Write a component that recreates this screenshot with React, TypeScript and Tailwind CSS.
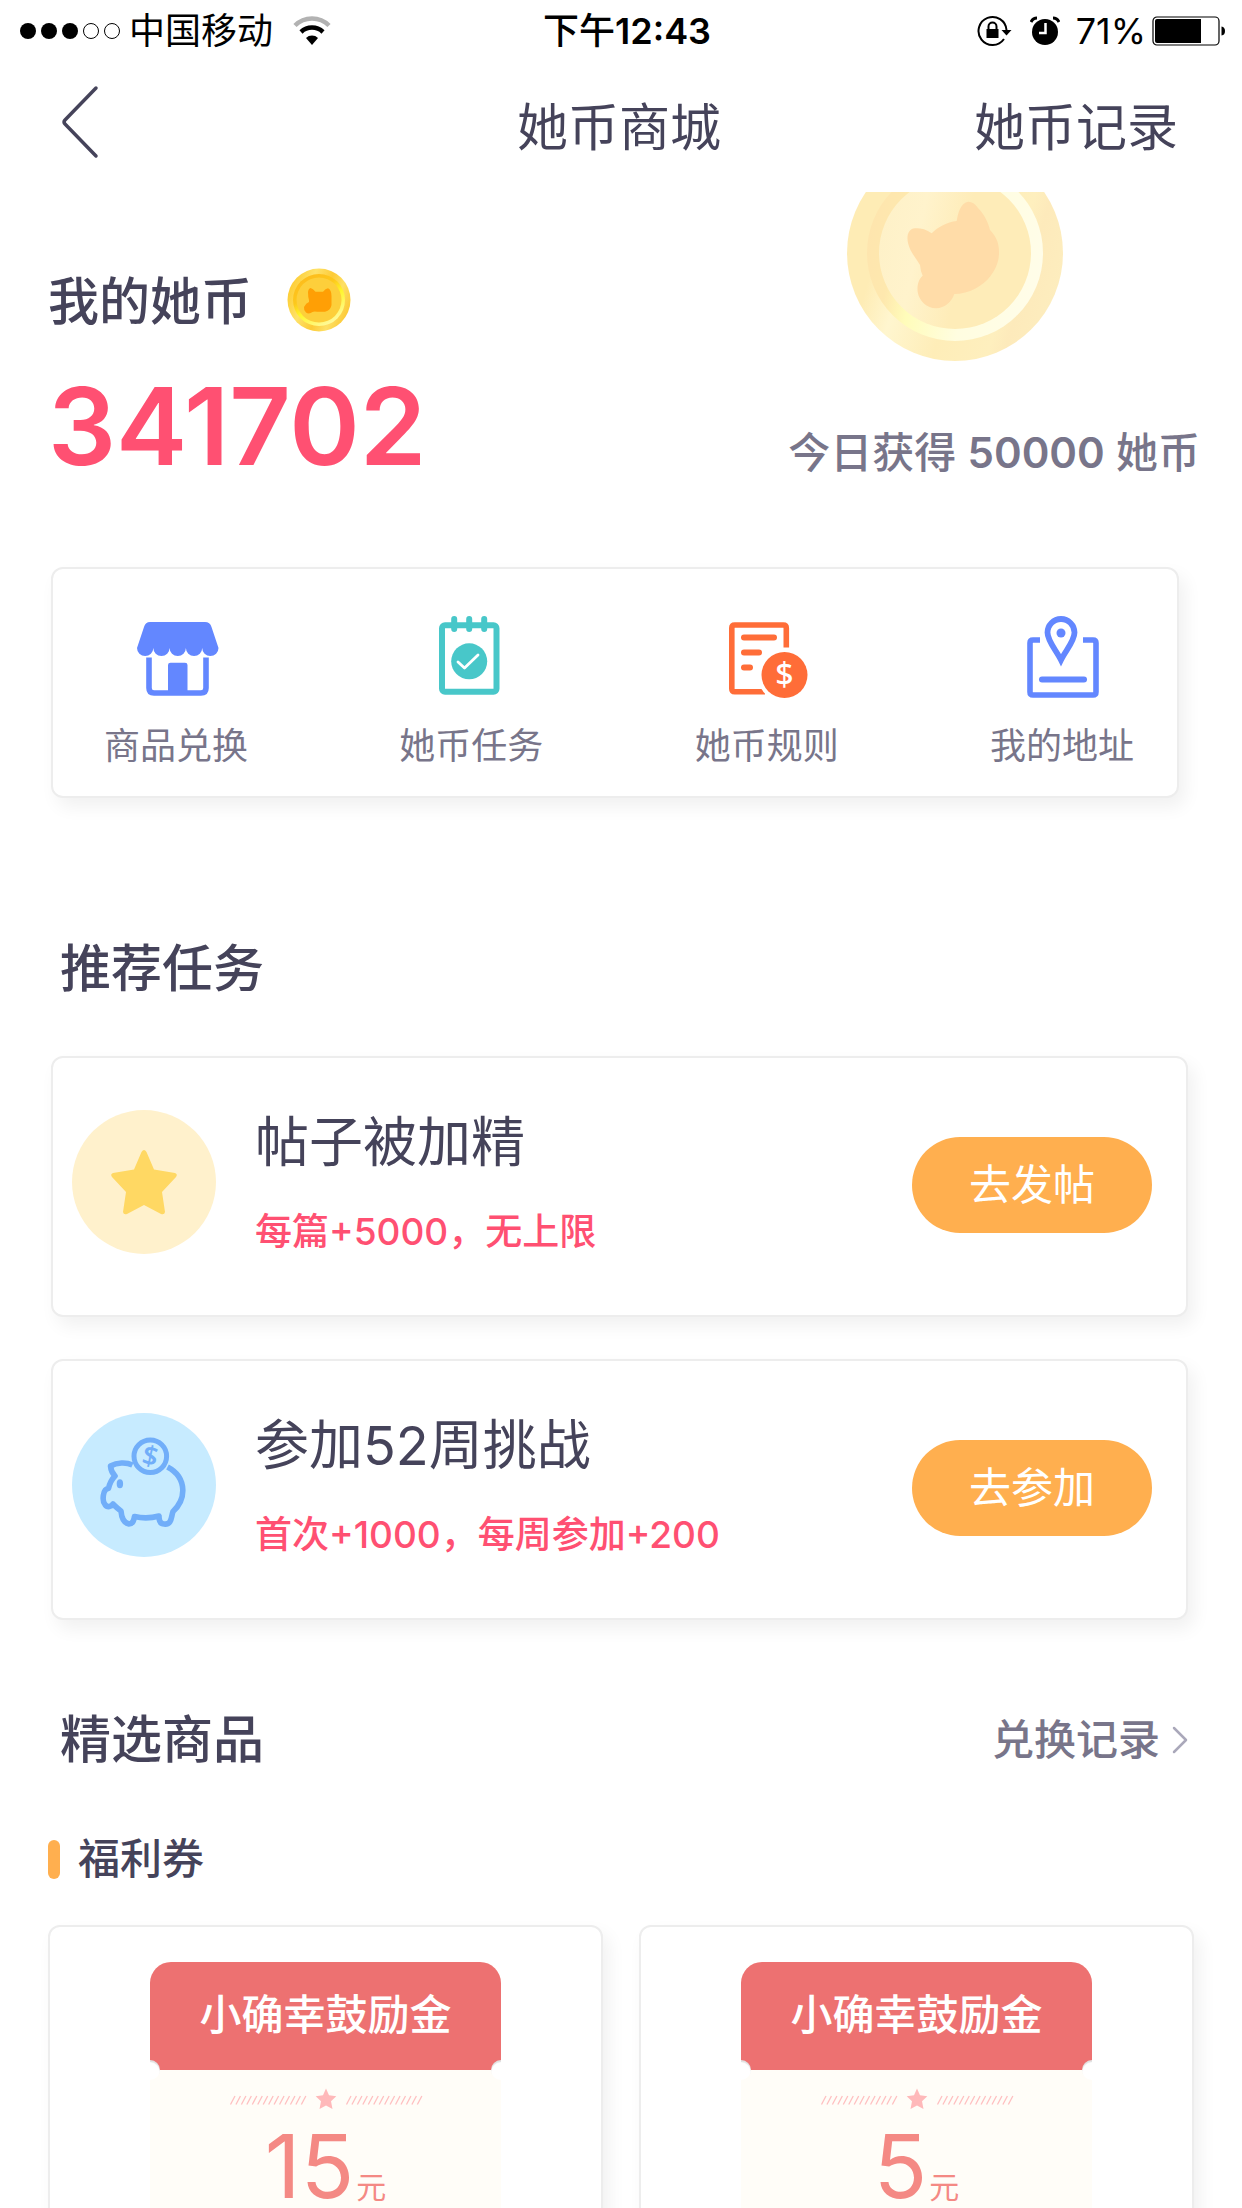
import React from 'react';

interface QuickEntry {
  label: string;
  icon: React.ReactNode;
}

interface Task {
  id: string;
  title: string;
  reward: string;
  action: string;
  icon: React.ReactNode;
}

interface Coupon {
  id: string;
  name: string;
  amount: number;
}

const COUPONS: Coupon[] = [
  { id: 'c15', name: '小确幸鼓励金', amount: 15 },
  { id: 'c5', name: '小确幸鼓励金', amount: 5 },
];

const STAR_PATH =
  'M10 -11.5 L31 -8 Q34 -7 32 -4 L18 11 L21 31 Q20.500 34 17 33 L0 24 L-17 33 Q-20.500 34 -21 31 L-18 11 L-32 -4 Q-34 -7 -31 -8 L-10 -11.500 L-2.500 -29 Q0 -33 2.500 -29 Z';

function WifiIcon() {
  return (
    <svg className="w-[38px] h-[30px]" viewBox="0 0 38 30" fill="none" aria-hidden="true">
      <path d="M2 9.500 A24 24 0 0 1 36 9.500" stroke="#b2b2b2" strokeWidth="4.500" />
      <path d="M8 16 A16 16 0 0 1 30 16" stroke="#000" strokeWidth="4.500" />
      <path d="M19 29 L13 22 A8.500 8.500 0 0 1 25 22 Z" fill="#000" />
    </svg>
  );
}

function RotationLockIcon() {
  return (
    <svg className="w-[35px] h-[32px]" viewBox="0 0 35 32" fill="none" aria-hidden="true">
      <path d="M29.500 15 A14 14 0 1 0 27 24" stroke="#000" strokeWidth="2" />
      <path d="M24.500 15 H34.500 L29.500 20.500 Z" fill="#000" />
      <rect x="9.500" y="14" width="12" height="9" fill="#000" />
      <path d="M11.500 15 V11.500 A4 4 0 0 1 19.500 11.500 V15" stroke="#000" strokeWidth="2" />
    </svg>
  );
}

function AlarmIcon() {
  return (
    <svg className="w-[30px] h-[30px]" viewBox="0 0 30 30" aria-hidden="true">
      <circle cx="15" cy="16" r="13" fill="#000" />
      <path d="M1 6 Q3 2 7 2 M23 2 Q27 2 29 6" stroke="#000" strokeWidth="3" fill="none" />
      <path d="M15.500 7 V17 H9" stroke="#fff" strokeWidth="2.500" fill="none" />
    </svg>
  );
}

function BatteryIcon() {
  return (
    <svg className="w-[74px] h-[30px]" viewBox="0 0 74 30" aria-hidden="true">
      <rect x="1" y="1" width="66" height="28" rx="4" fill="none" stroke="#000" strokeWidth="1.200" />
      <path d="M5 3 H49 V27 H5 Q3 27 3 25 V5 Q3 3 5 3 Z" fill="#000" />
      <path d="M69.500 10.500 Q73 11 73 15 Q73 19 69.500 19.500 Z" fill="#000" />
    </svg>
  );
}

function BigCoin() {
  return (
    <svg className="w-[216px] h-[169px]" viewBox="0 47 216 169" aria-hidden="true">
      <defs>
        <linearGradient id="bigRim" x1="0" y1="0.300" x2="1" y2="0.600">
          <stop offset="0" stopColor="#feecb5" />
          <stop offset="0.180" stopColor="#feecb5" />
          <stop offset="0.320" stopColor="#fff6cf" />
          <stop offset="0.550" stopColor="#feedb8" />
          <stop offset="0.780" stopColor="#feefbe" />
          <stop offset="0.850" stopColor="#fdeabb" />
          <stop offset="1" stopColor="#fdedbe" />
        </linearGradient>
        <linearGradient id="bigRing" x1="0" y1="0.400" x2="1" y2="0.600">
          <stop offset="0" stopColor="#fee5ae" />
          <stop offset="0.160" stopColor="#fee8ae" />
          <stop offset="0.300" stopColor="#fffcba" />
          <stop offset="0.600" stopColor="#fffde0" />
          <stop offset="1" stopColor="#fffde9" />
        </linearGradient>
        <linearGradient id="bigFace" x1="0" y1="0.400" x2="1" y2="0.600">
          <stop offset="0" stopColor="#fef1c8" />
          <stop offset="0.250" stopColor="#fff3cc" />
          <stop offset="0.550" stopColor="#feecb8" />
          <stop offset="1" stopColor="#feecb8" />
        </linearGradient>
      </defs>
      <circle cx="108" cy="108" r="108" fill="url(#bigRim)" />
      <circle cx="108" cy="108" r="88" fill="url(#bigRing)" />
      <circle cx="108" cy="108" r="76" fill="url(#bigFace)" />
      <path
        d="M84.700 88.300 C79 84 73 83 68 83.300 C61 84 59.500 91 61 98 C63 107 69 113 73 120 Q73.500 126 75.700 130.700 C71 135 70 141 70.700 147 C72 156 80 163 89 163.300 C98 163 104.500 157 107.300 149 C122 149 136 141 143.500 131 C149 124 152.300 116 152 106 C152 97 148 90 143 85 C141 76 136 68 131 63 C128 58.500 124.500 56.500 121.300 56.700 C114 58 111 67 109.700 76 C100 77 91 82 84.700 88.300 Z"
        fill="#ffdca8"
      />
    </svg>
  );
}

function SmallCoin() {
  return (
    <svg className="w-16 h-16" viewBox="0 0 64 64" aria-hidden="true">
      <defs>
        <linearGradient id="smallRim" x1="0" y1="0.300" x2="1" y2="0.700">
          <stop offset="0" stopColor="#fdcb2f" />
          <stop offset="0.300" stopColor="#fee26a" />
          <stop offset="0.550" stopColor="#fdcb37" />
          <stop offset="0.750" stopColor="#fee065" />
          <stop offset="1" stopColor="#fcc62f" />
        </linearGradient>
        <linearGradient id="smallRing" x1="0.200" y1="0" x2="0.800" y2="1">
          <stop offset="0" stopColor="#fdba1c" />
          <stop offset="0.350" stopColor="#fdc81c" />
          <stop offset="0.550" stopColor="#fff52a" />
          <stop offset="1" stopColor="#fffbb0" />
        </linearGradient>
      </defs>
      <circle cx="32" cy="32" r="31.500" fill="url(#smallRim)" />
      <circle cx="32" cy="32" r="26" fill="url(#smallRing)" />
      <circle cx="32" cy="32" r="22.500" fill="#fdcf3b" />
      <path
        d="M23.500 20 Q26 20.500 28.500 23.700 H36 Q38.500 20.500 41 20.300 Q44.500 22 44.500 28 V37 Q44 42 38 43.700 H30 Q27 43 25.500 44 Q22 46.500 19 44.500 Q16.500 42 17 39 Q19 35 22 34 V32 Q21 29 21 24 Q21.500 20.500 23.500 20 Z"
        fill="#ff9f05"
      />
    </svg>
  );
}

function StoreIcon() {
  return (
    <svg className="w-[88px] h-[84px]" viewBox="0 0 88 84" aria-hidden="true">
      <path
        d="M18 8 H73 Q78 8 79.500 13 L86.500 34 A8.150 8 0 0 1 70.200 34 A8.150 8 0 0 1 53.900 34 A8.150 8 0 0 1 37.600 34 A8.150 8 0 0 1 21.300 34 A8.150 8 0 0 1 5 34 L12 13 Q13.500 8 18 8 Z"
        fill="#6387ff"
      />
      <path d="M17 43.500 V74 Q17 79 22 79 H69 Q74 79 74 74 V43.500" fill="none" stroke="#6387ff" strokeWidth="5.600" />
      <path d="M36 78 V51 Q36 48.700 38.500 48.700 H53 Q55.500 48.700 55.500 51 V78 Z" fill="#6387ff" />
    </svg>
  );
}

function TaskIcon() {
  return (
    <svg className="w-[88px] h-[84px]" viewBox="0 0 88 84" fill="none" aria-hidden="true">
      <rect x="15" y="11.300" width="54.500" height="66.500" rx="3" stroke="#48c7c9" strokeWidth="6" />
      <path d="M27.200 5 V15 M42.200 5 V15 M57.200 5 V15" stroke="#48c7c9" strokeWidth="6" strokeLinecap="round" />
      <circle cx="42.200" cy="47.300" r="18" fill="#48c7c9" />
      <path d="M31 48 L37.500 54 L51 41" stroke="#fff" strokeWidth="2.800" strokeLinecap="round" strokeLinejoin="round" />
    </svg>
  );
}

function RuleIcon() {
  return (
    <svg className="w-[88px] h-[84px]" viewBox="0 0 88 84" fill="none" aria-hidden="true">
      <path d="M63.300 33.500 V14 Q63.300 11 60.300 11 H11.800 Q8.800 11 8.800 14 V74.800 Q8.800 77.800 11.800 77.800 H42" stroke="#ff6d38" strokeWidth="5.600" />
      <path d="M21 23.500 H51 M21 38.500 H36 M21 53.500 H27" stroke="#ff6d38" strokeWidth="6" strokeLinecap="round" />
      <circle cx="61.500" cy="61" r="27" fill="#fff" />
      <circle cx="61.500" cy="61" r="23" fill="#ff6d38" />
      <text x="61.500" y="72" textAnchor="middle" fontSize="32" fontWeight="500" fill="#fff" className="font-['Noto_Sans',sans-serif]">
        $
      </text>
    </svg>
  );
}

function AddressIcon() {
  return (
    <svg className="w-[88px] h-[84px]" viewBox="0 0 88 84" fill="none" aria-hidden="true">
      <path d="M22 26 H15 Q12 26 12 29 V78 Q12 81 15 81 H75 Q78 81 78 78 V29 Q78 26 75 26 H65" stroke="#6387ff" strokeWidth="5.600" />
      <path d="M43 46 C38 36 29.500 27 29.500 18.500 A13.500 13.500 0 0 1 56.500 18.500 C56.500 27 48 36 43 46 Z" stroke="#6387ff" strokeWidth="5.800" />
      <circle cx="43" cy="19" r="4.500" fill="#6387ff" />
      <path d="M24 65.500 H66" stroke="#6387ff" strokeWidth="6" strokeLinecap="round" />
    </svg>
  );
}

function StarBadge() {
  return (
    <svg className="w-36 h-36 shrink-0" viewBox="0 0 144 144" aria-hidden="true">
      <circle cx="72" cy="72" r="72" fill="#fff1cc" />
      <path d={STAR_PATH} transform="translate(72 71)" fill="#ffd863" />
    </svg>
  );
}

function PiggyBadge() {
  return (
    <svg className="w-36 h-36 shrink-0" viewBox="0 0 144 144" fill="none" aria-hidden="true">
      <circle cx="72" cy="72" r="72" fill="#c7ebff" />
      <path
        d="M60.500 52 C54 49 45 49.500 38.500 53 Q39 59 43 63 C39 67 37.500 71 36.500 75.500 C30.500 76 30 88 33 91.500 C35.500 95 39.500 93.500 41 91 C44 94 46 96 49 98 C49.500 104 52 110 57 111 C61 111 62 107 62.500 103.500 C71 105.500 78 105.500 87 103 C87 107 88 111 92 111 C100 112 99 104 101 98.500 C108 92 111 86 110.800 77 C110.500 67 105 59 95.500 54"
        stroke="#71aef9"
        strokeWidth="5.600"
        strokeLinejoin="round"
      />
      <ellipse cx="47.900" cy="70.700" rx="3.200" ry="4.500" fill="#71aef9" />
      <circle cx="78.300" cy="43.300" r="16.300" fill="#c7ebff" stroke="#71aef9" strokeWidth="5" />
      <text x="78.300" y="52.500" textAnchor="middle" fontSize="27" fontWeight="600" fill="#71aef9" transform="rotate(12 78.300 43.300)" className="font-['Noto_Sans',sans-serif]">
        $
      </text>
    </svg>
  );
}

function CouponDivider() {
  const lines = Array.from({ length: 14 }, (_, i) => i);
  return (
    <svg className="w-[194px] h-[22px]" viewBox="0 0 194 22" aria-hidden="true">
      {lines.map((i) => (
        <g key={i} stroke="#ffbfc0" strokeWidth="1.300">
          <line x1={1.500 + i * 5.450} y1="16.500" x2={6 + i * 5.450} y2="8" />
          <line x1={117.500 + i * 5.450} y1="16.500" x2={122 + i * 5.450} y2="8" />
        </g>
      ))}
      <path
        d="M97 0.500 L100 7.300 L107.300 8.300 L102 13.300 L103.500 21 L97 17.500 L90.500 21 L92 13.300 L86.700 8.300 L94 7.300 Z"
        fill="#ffb9ba"
      />
    </svg>
  );
}

const QUICK_ENTRIES: QuickEntry[] = [
  { label: '商品兑换', icon: <StoreIcon /> },
  { label: '她币任务', icon: <TaskIcon /> },
  { label: '她币规则', icon: <RuleIcon /> },
  { label: '我的地址', icon: <AddressIcon /> },
];

const TASKS: Task[] = [
  { id: 'post', title: '帖子被加精', reward: '每篇+5000，无上限', action: '去发帖', icon: <StarBadge /> },
  { id: 'weeks', title: '参加52周挑战', reward: '首次+1000，每周参加+200', action: '去参加', icon: <PiggyBadge /> },
];

function StatusBar() {
  return (
    <div className="grid grid-cols-3 items-center h-[60px] pt-0.5 pl-5 pr-4 text-[36px] leading-[58px] text-black">
      <div className="flex items-center">
        <svg className="w-[103px] h-5" viewBox="0 0 103 20" aria-hidden="true">
          <circle cx="8" cy="10" r="8" />
          <circle cx="29" cy="10" r="8" />
          <circle cx="50" cy="10" r="8" />
          <circle cx="71" cy="10" r="7.500" fill="none" stroke="#000" />
          <circle cx="92" cy="10" r="7.500" fill="none" stroke="#000" />
        </svg>
        <span className="ml-1.5">中国移动</span>
        <span className="ml-5">
          <WifiIcon />
        </span>
      </div>
      <div className="pl-2 text-center font-medium">
        下午<span className="font-semibold">12:43</span>
      </div>
      <div className="flex items-center justify-end">
        <RotationLockIcon />
        <span className="ml-[18px]">
          <AlarmIcon />
        </span>
        <span className="ml-4 mr-1.5">71%</span>
        <BatteryIcon />
      </div>
    </div>
  );
}

function NavBar() {
  return (
    <header className="grid grid-cols-3 items-center h-[132px] pt-1 pl-[60px] pr-16 text-[51px] leading-[72px]">
      <button type="button" aria-label="返回" className="w-10 pb-3">
        <svg className="w-10 h-[74px]" viewBox="0 0 40 74" fill="none" aria-hidden="true">
          <path d="M36 3 L5 35 Q3 37 5 39 L36 71" stroke="#45435a" strokeWidth="3.500" strokeLinecap="round" />
        </svg>
      </button>
      <h1 className="text-center">她币商城</h1>
      <a href="#records" className="text-right">
        她币记录
      </a>
    </header>
  );
}

function TaskCard({ task }: { task: Task }) {
  return (
    <li className="flex items-center pt-[46px] pb-14 pl-[19px] pr-[34px] rounded-xl border-2 border-[#ededed] bg-white shadow-[6px_9px_18px_rgba(0,0,0,0.06)]">
      {task.icon}
      <div className="flex-1 ml-[39px]">
        <h3 className="text-[54px] leading-[78px]">{task.title}</h3>
        <p className="mt-[23px] text-[37px] leading-[54px] font-medium text-[#ff5072]">{task.reward}</p>
      </div>
      <button type="button" className="mt-1.5 w-60 h-24 rounded-full bg-[#ffaf4f] text-[42px] text-white">
        {task.action}
      </button>
    </li>
  );
}

function CouponCard({ coupon }: { coupon: Coupon }) {
  return (
    <li className="flex justify-center pt-[35px] rounded-xl border-2 border-[#ededed] bg-white shadow-[6px_9px_18px_rgba(0,0,0,0.06)]">
      <div className="relative w-[351px] h-[351px] overflow-hidden rounded-t-[21px] bg-[#fffdf8]">
        <h4 className="h-[108px] bg-[#ed7171] text-center text-[42px] leading-[105px] font-medium text-white">{coupon.name}</h4>
        {/* ticket notches */}
        <span className="absolute -left-2.5 top-[98px] size-5 rounded-full bg-white shadow-[inset_0_2px_1px_rgba(0,0,0,0.12)]" />
        <span className="absolute -right-2.5 top-[98px] size-5 rounded-full bg-white shadow-[inset_0_2px_1px_rgba(0,0,0,0.12)]" />
        <div className="flex justify-center pt-[18px]">
          <CouponDivider />
        </div>
        <p className="mt-2 text-center text-[#f48984]">
          <span className="text-[88px] leading-[96px]">{coupon.amount}</span>
          <span className="ml-0.5 text-[30px]">元</span>
        </p>
      </div>
    </li>
  );
}

export default function App() {
  return (
    <div className="flex flex-col h-screen bg-white text-[#45435a] font-['Inter','Noto_Sans_CJK_SC',sans-serif]">
      <StatusBar />
      <NavBar />

      <main className="flex-1 overflow-y-auto [scrollbar-width:none]">
        {/* Balance */}
        <section className="flex justify-between pl-12 pr-[42px]">
          <div className="pt-[70px]">
            <div className="flex items-center gap-[35px]">
              <h2 className="pt-1 text-[51px] leading-[72px] font-medium">我的她币</h2>
              <SmallCoin />
            </div>
            <p className="mt-7 text-[107px] leading-[120px] font-semibold text-[#ff5072]">341702</p>
          </div>
          <div className="flex flex-col items-end">
            <div className="mr-[137px]">
              <BigCoin />
            </div>
            <p className="mt-[62px] text-[42px] leading-[60px] font-medium text-[#78758a]">
              今日获得 <span className="font-semibold">50000</span> 她币
            </p>
          </div>
        </section>

        {/* Quick entries */}
        <nav className="flex justify-between mt-[81px] ml-[51px] mr-[63px] pt-[45px] pb-[26px] pl-[51px] pr-[43px] rounded-xl border-2 border-[#ededed] bg-white shadow-[6px_9px_18px_rgba(0,0,0,0.06)]">
          {QUICK_ENTRIES.map((entry) => (
            <a key={entry.label} href="#entry" className="flex flex-col items-center gap-6 text-[36px] leading-[48px] text-[#78758a]">
              {entry.icon}
              {entry.label}
            </a>
          ))}
        </nav>

        {/* Recommended tasks */}
        <section className="mt-[135px] pl-[51px] pr-[54px]">
          <h2 className="pl-[9px] text-[51px] leading-[72px] font-medium">推荐任务</h2>
          <ul className="flex flex-col gap-[42px] mt-[51px]">
            {TASKS.map((task) => (
              <TaskCard key={task.id} task={task} />
            ))}
          </ul>
        </section>

        {/* Featured goods */}
        <section className="mt-[84px] px-12">
          <div className="flex items-center justify-between pl-3 pr-1.5">
            <h2 className="text-[51px] leading-[72px] font-medium">精选商品</h2>
            <a href="#exchange" className="flex items-center gap-3 text-[42px] leading-[60px] font-medium text-[#78758a]">
              兑换记录
              <svg className="w-4 h-7" viewBox="0 0 16 28" fill="none" aria-hidden="true">
                <path d="M2 2 L14 14 L2 26" stroke="#aaa8ba" strokeWidth="2.500" strokeLinecap="round" strokeLinejoin="round" />
              </svg>
            </a>
          </div>
          <div className="flex items-center gap-[18px] mt-[53px]">
            <span className="w-3 h-[39px] rounded-full bg-[#ffaf4f]" />
            <h3 className="text-[42px] leading-[60px] font-medium">福利券</h3>
          </div>
          <ul className="grid grid-cols-2 gap-9 mt-9">
            {COUPONS.map((coupon) => (
              <CouponCard key={coupon.id} coupon={coupon} />
            ))}
          </ul>
        </section>
      </main>
    </div>
  );
}
